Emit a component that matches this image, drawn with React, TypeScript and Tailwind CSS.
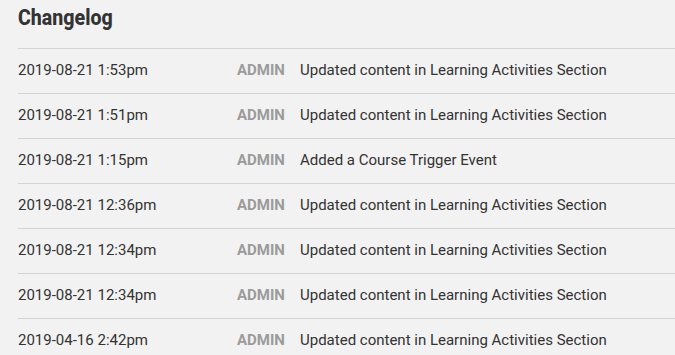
const entries = [
  { date: '2019-08-21 1:53pm', user: 'ADMIN', message: 'Updated content in Learning Activities Section' },
  { date: '2019-08-21 1:51pm', user: 'ADMIN', message: 'Updated content in Learning Activities Section' },
  { date: '2019-08-21 1:15pm', user: 'ADMIN', message: 'Added a Course Trigger Event' },
  { date: '2019-08-21 12:36pm', user: 'ADMIN', message: 'Updated content in Learning Activities Section' },
  { date: '2019-08-21 12:34pm', user: 'ADMIN', message: 'Updated content in Learning Activities Section' },
  { date: '2019-08-21 12:34pm', user: 'ADMIN', message: 'Updated content in Learning Activities Section' },
  { date: '2019-04-16 2:42pm', user: 'ADMIN', message: 'Updated content in Learning Activities Section' },
]

export default function App() {
  return (
    <div className="min-h-screen bg-[#f2f2f2] pl-[18px] font-['Roboto',sans-serif] text-[#333]">
      <h2 className="pt-[1px] pb-[13px] text-[22px] font-extrabold leading-[34px] text-[#333]">
        <span className="inline-block origin-left scale-x-[0.89]">Changelog</span>
      </h2>

      {/* Entries */}
      <div>
        {entries.map((entry, i) => (
          <div key={i} className="flex h-[45px] items-center border-t border-[#d4d4d4] pb-[1px] text-[15px]">
            <div className="w-[219px]">{entry.date}</div>
            <div className="w-[63px] font-bold text-[#9b9b9b]">{entry.user}</div>
            <div>{entry.message}</div>
          </div>
        ))}
      </div>
    </div>
  )
}
